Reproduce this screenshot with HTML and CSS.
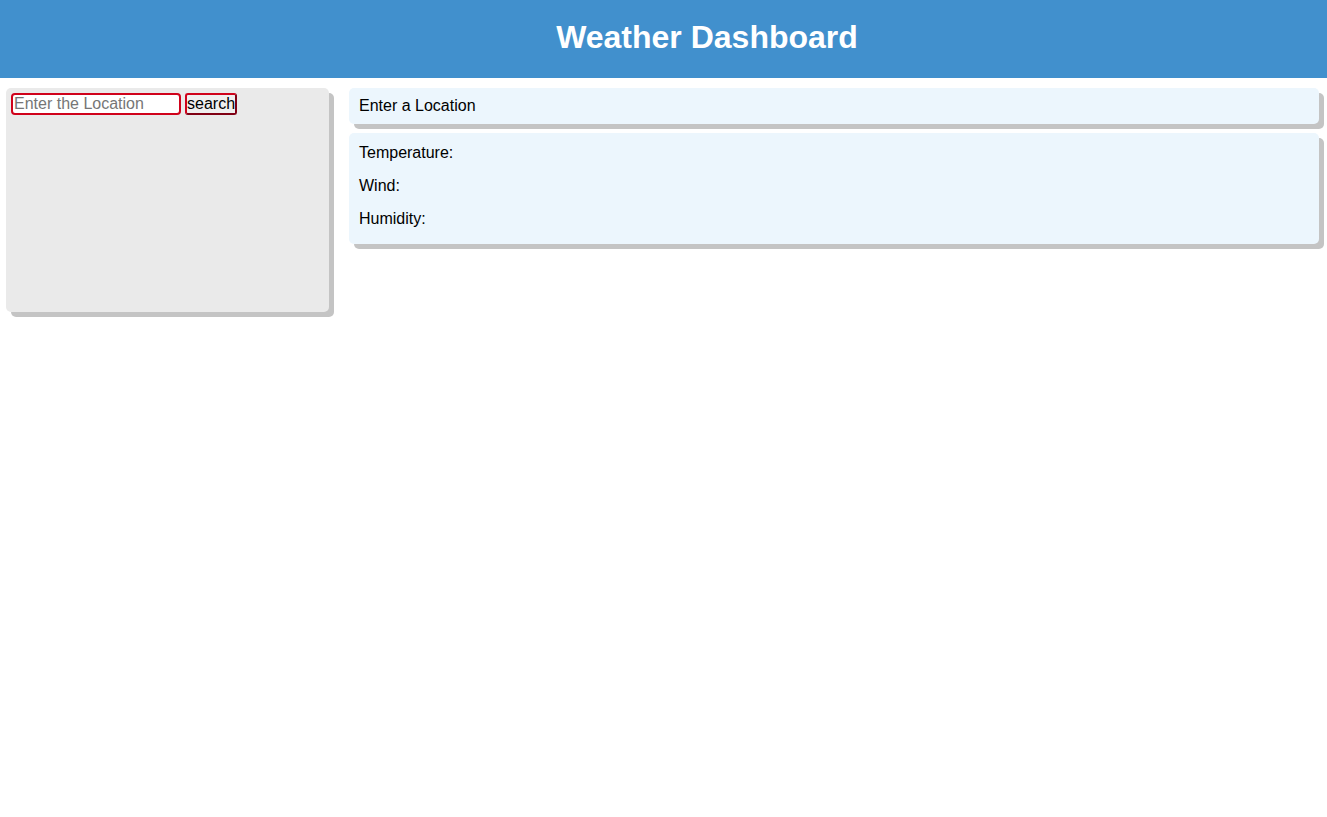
FILE: index.html
```html
<!DOCTYPE html>
<html>
<head>
<meta charset="utf-8">
<title>Weather Dashboard</title>
<link rel="stylesheet" href="styles.css">
</head>
<body>
<header class="header"><h1 class="title">Weather Dashboard</h1></header>
<div class="layout">
  <aside class="sidebar">
    <form class="search">
      <input class="search-input" type="text" placeholder="Enter the Location">
      <button class="search-btn" type="button">search</button>
    </form>
  </aside>
  <main class="main">
    <div class="card city">Enter a Location</div>
    <div class="card details">
      <p class="stat">Temperature:</p>
      <p class="stat">Wind:</p>
      <p class="stat">Humidity:</p>
    </div>
  </main>
</div>
</body>
</html>
```
FILE: styles.css
```css
html, body { margin: 0; padding: 0; background: #fff; }
body { font-family: "Liberation Sans", Arial, sans-serif; color: #000; }
.header {
  background: #4190cd;
  height: 78px;
  box-sizing: border-box;
  padding-bottom: 4px;
  display: flex;
  align-items: center;
  justify-content: center;
}
.title {
  margin: 0;
  color: #fff;
  font-size: 32px;
  font-weight: bold;
  padding-left: 87px;
}
.layout {
  display: flex;
  align-items: flex-start;
  gap: 20px;
  padding: 10px 8px 20px 6px;
}
.sidebar {
  width: 323px;
  height: 224px;
  flex: none;
  box-sizing: border-box;
  background: #eaeaea;
  border-radius: 5px;
  box-shadow: 5px 5px 0 #c4c4c4;
  padding: 5px;
}
.search { display: flex; gap: 4px; margin: 0; }
.search-input {
  width: 170px;
  height: 22px;
  box-sizing: border-box;
  border: 2px solid #d0021b;
  border-radius: 4px;
  padding: 0 0 0 1px;
  font-family: "Liberation Sans", Arial, sans-serif;
  font-size: 16px;
  color: #000;
  background: #fff;
  outline: none;
}
.search-input::placeholder { color: #767676; }
.search-btn {
  width: 52px;
  height: 22px;
  box-sizing: border-box;
  border: 2px solid #d0021b;
  border-right-color: #800014;
  border-bottom-color: #800014;
  border-radius: 3px;
  padding: 0;
  background: #efefef;
  font-family: "Liberation Sans", Arial, sans-serif;
  font-size: 16px;
  color: #000;
}
.main { flex: 1; display: flex; flex-direction: column; gap: 9px; }
.card {
  background: #ecf6fd;
  border-radius: 5px;
  box-shadow: 5px 5px 0 #c4c4c4;
  padding: 0 10px;
  font-size: 16px;
}
.city { height: 36px; line-height: 36px; }
.details { padding-top: 11px; padding-bottom: 16px; }
.stat { margin: 0 0 15px; line-height: 18px; }
.stat:last-child { margin-bottom: 0; }
```
